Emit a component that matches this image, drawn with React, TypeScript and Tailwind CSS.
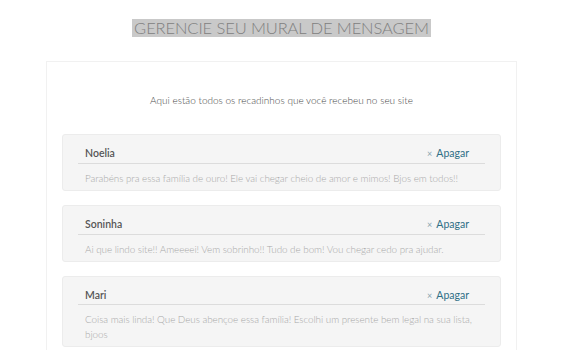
const recados = [
  {
    nome: "Noelia",
    texto:
      "Parabéns pra essa família de ouro! Ele vai chegar cheio de amor e mimos! Bjos em todos!!",
  },
  {
    nome: "Soninha",
    texto:
      "Ai que lindo site!! Ameeeei! Vem sobrinho!! Tudo de bom! Vou chegar cedo pra ajudar.",
  },
  {
    nome: "Mari",
    texto:
      "Coisa mais linda! Que Deus abençoe essa família! Escolhi um presente bem legal na sua lista, bjoos",
  },
];

function Recado({ nome, texto }: { nome: string; texto: string }) {
  return (
    <div className="rounded-[3px] border border-[#ececec] bg-[#f5f5f5] px-[15px] pb-[4px] pt-[11px]">
      <div className="flex items-center justify-between border-b border-[#dcdcdc] pb-[1px] pl-[7px] pr-[16px]">
        <span className="text-[10.5px] font-semibold text-[#555]">{nome}</span>
        <button className="flex items-center gap-[4px] text-[10.5px] text-[#2f6f86]">
          <span className="text-[9px] text-[#8aa4b0]">×</span>
          Apagar
        </button>
      </div>
      <p className="pl-[7px] pr-[10px] pt-[7px] text-[9.9px] font-light leading-[15px] tracking-[-0.05px] text-[#a8a8a8]">
        {texto}
      </p>
    </div>
  );
}

export default function App() {
  return (
    <div className="min-h-[350px] bg-white font-['Lato',sans-serif]">
      <div className="flex justify-center pt-[19px]">
        <h1 className="bg-[#c9c9c9] px-[2px] text-[16.5px] font-light leading-[18px] tracking-[-0.1px] text-[#808080]">
          GERENCIE SEU MURAL DE MENSAGEM
        </h1>
      </div>
      <div className="mx-auto mt-[24px] w-[471px] border border-[#f1f1f1] px-[15px] pb-[15px]">
        <p className="pb-[26px] pt-[31px] text-center text-[10px] font-light text-[#4a4a4a]">
          Aqui estão todos os recadinhos que você recebeu no seu site
        </p>
        <div className="flex flex-col gap-[14px]">
          {recados.map((r) => (
            <Recado key={r.nome} nome={r.nome} texto={r.texto} />
          ))}
        </div>
      </div>
    </div>
  );
}
